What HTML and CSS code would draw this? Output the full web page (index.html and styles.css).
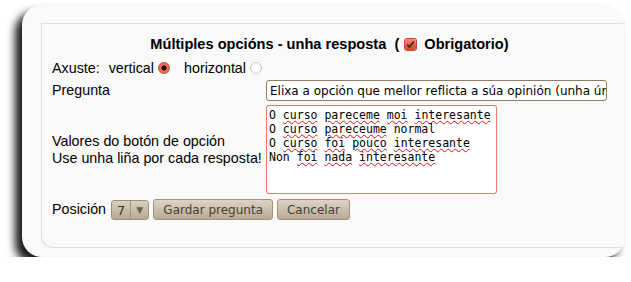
FILE: index.html
```html
<!DOCTYPE html>
<html lang="gl">
<head>
  <meta charset="utf-8">
  <title>Múltiples opcións - unha resposta</title>
  <link rel="stylesheet" href="styles.css">
</head>
<body>
  <div class="card">
    <form class="question">
      <h2 class="question__title">
        Múltiples opcións - unha resposta&nbsp; (
        <span class="check" aria-hidden="true">
          <svg width="9" height="9" viewBox="0 0 9 9"><path d="M1.2 4.6 3.4 7 7.8 1.6" fill="none" stroke="#3a2a22" stroke-width="1.7"/></svg>
        </span>
        Obrigatorio)
      </h2>

      <div class="question__setting">
        <span class="question__setting-name">Axuste:</span>
        <span>vertical</span><span class="radio radio--on"></span>
        <span class="question__setting-alt">horizontal</span><span class="radio"></span>
      </div>

      <div class="question__grid">
        <label class="question__label">Pregunta</label>
        <div class="field field--input">Elixa a opción que mellor reflicta a súa opinión (unha única resposta)</div>

        <label class="question__label">Valores do botón de opción<br>Use unha liña por cada resposta!</label>
        <div class="field field--area">O <u>curso</u> <u>pareceme</u> <u>moi</u> <u>interesante</u>
O <u>curso</u> <u>pareceume</u> normal
O <u>curso</u> <u>foi</u> <u>pouco</u> <u>interesante</u>
Non <u>foi</u> <u>nada</u> <u>interesante</u></div>
      </div>

      <div class="question__actions">
        <span class="question__label">Posición</span>
        <span class="select"><span class="select__value">7</span><span class="select__arrow">▼</span></span>
        <button type="button" class="btn">Gardar pregunta</button>
        <button type="button" class="btn">Cancelar</button>
      </div>
    </form>
  </div>
</body>
</html>
```

FILE: styles.css
```css
*, *::before, *::after {
  box-sizing: border-box;
}

body {
  margin: 0;
  background: #ffffff;
  font-family: "Liberation Sans", Arial, sans-serif;
  font-size: 14.3px;
  color: #000000;
}

.card {
  height: 252px;
  margin: 5px 6px 0 22px;
  padding: 18px 0 0 19px;
  background: #f9f9f9;
  border-radius: 20px;
  box-shadow: -7px 7px 8px rgba(0, 0, 0, 0.9);
  overflow: hidden;
}

.question {
  height: 225px;
  padding: 12px 0 0 10px;
  border: 1px solid #dedede;
  border-right: none;
  border-bottom-left-radius: 12px;
}

.question__title {
  display: flex;
  justify-content: center;
  align-items: center;
  gap: 4px;
  margin: 0;
  padding-right: 18px;
  font-size: 14.6px;
  line-height: 17px;
}

.check {
  display: inline-flex;
  align-items: center;
  justify-content: center;
  width: 11px;
  height: 11px;
  margin: 0 4px 0 2px;
  border-radius: 2px;
  background: linear-gradient(#f08a78, #d9442e);
  box-shadow: 0 0 0 1px #c84a36;
}

.question__setting {
  display: flex;
  align-items: center;
  gap: 4px;
  margin-top: 6px;
  line-height: 18px;
}

.question__setting-name {
  margin-right: 5px;
}

.question__setting-alt {
  margin-left: 10px;
}

.radio {
  display: inline-block;
  width: 12px;
  height: 12px;
  border-radius: 50%;
  border: 1px solid #c9c3bb;
  background: #ffffff;
}

.radio--on {
  border-color: #d0533f;
  background: radial-gradient(circle, #2a1a16 0 2.3px, #f07b67 3px, #e4583f 6px);
}

.question__grid {
  display: grid;
  grid-template-columns: 214px 341px;
  align-items: center;
  row-gap: 4px;
  margin-top: 3px;
}

.question__label {
  line-height: 17px;
}

.field {
  font-family: "DejaVu Sans", sans-serif;
  font-size: 12px;
  background: #ffffff;
  border: 1px solid #8d7e62;
  border-radius: 3px;
}

.field--input {
  height: 21px;
  padding: 2px 3px;
  line-height: 16px;
  white-space: nowrap;
  overflow: hidden;
}

.field--area {
  width: 231px;
  height: 89px;
  padding: 2px 2px;
  font-family: "DejaVu Sans Mono", monospace;
  font-size: 11.5px;
  line-height: 14px;
  white-space: pre;
  border-color: #f07a66;
  border-top-color: #a08d72;
  border-radius: 3px;
}

.field--area u {
  text-decoration: underline wavy #e01010;
  text-decoration-thickness: 1px;
  text-underline-offset: 1px;
}

.question__actions {
  display: flex;
  align-items: center;
  gap: 4px;
  margin-top: 5px;
}

.question__actions .question__label {
  margin-right: 1px;
}

.select {
  display: inline-flex;
  height: 20px;
  border: 1px solid #9e917a;
  border-radius: 3px;
  background: linear-gradient(#d9d0c1, #b6aa95);
  font-family: "DejaVu Sans", sans-serif;
  font-size: 13px;
  color: #3e3528;
}

.select__value {
  padding: 1px 5px 0 5px;
  border-right: 1px solid #a2957f;
  line-height: 17px;
}

.select__arrow {
  width: 17px;
  font-size: 9px;
  line-height: 18px;
  text-align: center;
  color: #6a6052;
}

.btn {
  height: 21px;
  padding: 0 9px;
  border: 1px solid #a0937c;
  border-radius: 3px;
  background: linear-gradient(#ddd4c6, #b7ab96);
  font-family: "DejaVu Sans", sans-serif;
  font-size: 12px;
  color: #4a4032;
  cursor: pointer;
}
```
